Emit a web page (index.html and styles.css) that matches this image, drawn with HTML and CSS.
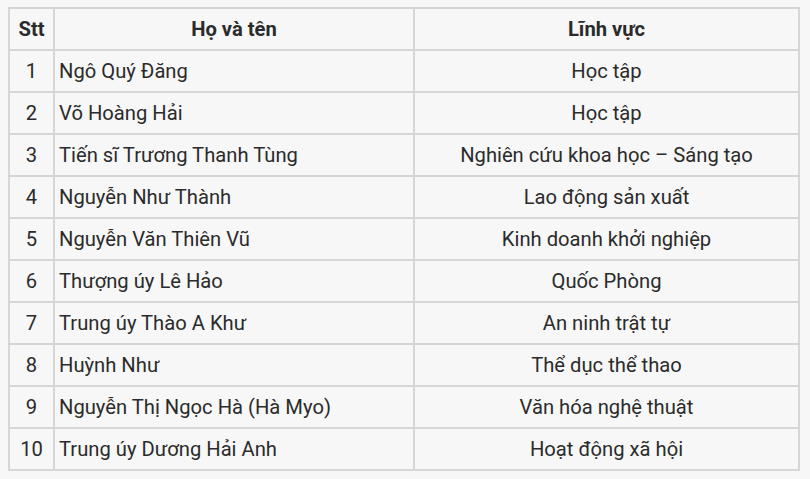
FILE: index.html
```html
<!DOCTYPE html>
<html lang="vi">
<head>
<meta charset="utf-8">
<link rel="stylesheet" href="styles.css">
</head>
<body>
<table class="list">
  <colgroup>
    <col class="c-stt">
    <col class="c-name">
    <col class="c-field">
  </colgroup>
  <thead>
    <tr><th>Stt</th><th>Họ và tên</th><th>Lĩnh vực</th></tr>
  </thead>
  <tbody>
    <tr><td class="num">1</td><td class="name">Ngô Quý Đăng</td><td class="field">Học tập</td></tr>
    <tr><td class="num">2</td><td class="name">Võ Hoàng Hải</td><td class="field">Học tập</td></tr>
    <tr><td class="num">3</td><td class="name">Tiến sĩ Trương Thanh Tùng</td><td class="field">Nghiên cứu khoa học – Sáng tạo</td></tr>
    <tr><td class="num">4</td><td class="name">Nguyễn Như Thành</td><td class="field">Lao động sản xuất</td></tr>
    <tr><td class="num">5</td><td class="name">Nguyễn Văn Thiên Vũ</td><td class="field">Kinh doanh khởi nghiệp</td></tr>
    <tr><td class="num">6</td><td class="name">Thượng úy Lê Hảo</td><td class="field">Quốc Phòng</td></tr>
    <tr><td class="num">7</td><td class="name">Trung úy Thào A Khư</td><td class="field">An ninh trật tự</td></tr>
    <tr><td class="num">8</td><td class="name">Huỳnh Như</td><td class="field">Thể dục thể thao</td></tr>
    <tr><td class="num">9</td><td class="name">Nguyễn Thị Ngọc Hà (Hà Myo)</td><td class="field">Văn hóa nghệ thuật</td></tr>
    <tr><td class="num">10</td><td class="name">Trung úy Dương Hải Anh</td><td class="field">Hoạt động xã hội</td></tr>
  </tbody>
</table>
</body>
</html>
```
FILE: styles.css
```css
html, body {
  margin: 0;
  padding: 0;
  background: #f7f7f7;
}
body {
  padding: 7px 0 0 8px;
  font-family: Roboto, "Noto Sans", sans-serif;
  color: #2b2b2b;
  font-size: 20.2px;
}
.list {
  border-collapse: collapse;
  table-layout: fixed;
  width: 792px;
  border: 2px solid #d6d6d6;
}
.c-stt { width: 45px; }
.c-name { width: 360px; }
.c-field { width: auto; }
.list th, .list td {
  border: 2px solid #d6d6d6;
  height: 42px;
  padding: 0 4px;
  line-height: 22px;
  box-sizing: border-box;
}
.list th {
  font-weight: bold;
  text-align: center;
}
.num { text-align: center; }
.name { text-align: left; }
.field { text-align: center; }
```
